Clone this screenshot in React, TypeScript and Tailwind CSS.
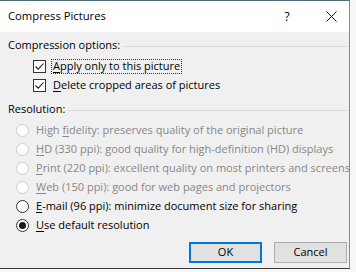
import React from "react";

function Check() {
  return (
    <span className="w-[13px] h-[13px] border border-[#333333] bg-white flex items-center justify-center shrink-0">
      <svg width="11" height="11" viewBox="0 0 11 11">
        <path d="M1.5 5.5 L4.2 8.2 L9.5 2.5" fill="none" stroke="#1a1a1a" strokeWidth="1.1" />
      </svg>
    </span>
  );
}

function Radio({ disabled, checked }: { disabled?: boolean; checked?: boolean }) {
  return (
    <span
      className={
        "w-[13px] h-[13px] rounded-full bg-white border flex items-center justify-center shrink-0 " +
        (disabled ? "border-[#cccccc]" : "border-[#333333]")
      }
    >
      {checked && <span className="w-[7px] h-[7px] rounded-full bg-[#1a1a1a]" />}
    </span>
  );
}

function Header({ text }: { text: string }) {
  return (
    <div className="h-[19px] flex items-center gap-[3px] pr-[2px]">
      <span className="whitespace-nowrap">{text}</span>
      <span className="flex-1 h-px bg-[#d9d9d9] mt-[1px]" />
    </div>
  );
}

function RadioRow({
  u,
  rest,
  pre,
  disabled,
  checked,
}: {
  u: string;
  rest: string;
  pre?: string;
  disabled?: boolean;
  checked?: boolean;
}) {
  return (
    <div className="h-[19px] flex items-center pl-[8px] gap-[7px]">
      <Radio disabled={disabled} checked={checked} />
      <span className={"whitespace-nowrap " + (disabled ? "text-[#878787]" : "text-black")}>
        {pre}
        <span className="underline underline-offset-[2px]">{u}</span>
        {rest}
      </span>
    </div>
  );
}

export default function App() {
  return (
    <div className="w-[356px] h-[272px] bg-[#f7f7f7] overflow-hidden text-[11px] text-black font-['Open_Sans',sans-serif]">
      <div className="w-[350px] h-[269px] flex flex-col border-t border-t-[#4d6d79] border-r border-r-[#8a8a8a] border-b border-b-[#3a3a3a]">
        <div className="h-[31px] bg-white flex items-center pl-[8px] shrink-0">
          <span className="flex-1 text-[11.25px]">Compress Pictures</span>
          <span className="w-[12px] text-center mr-[33px] text-[12px]">?</span>
          <svg width="11" height="11" viewBox="0 0 11 11" className="mr-[12px]">
            <path d="M0.5 0.5 L10.5 10.5 M10.5 0.5 L0.5 10.5" stroke="#111" strokeWidth="1" />
          </svg>
        </div>
        <div className="flex-1 bg-[#f0f0f0] pl-[8px] pt-[4px] flex flex-col">
          <Header text="Compression options:" />
          <div className="mt-[2px] h-[19px] flex items-center pl-[25px] gap-[5px]">
            <Check />
            <span className="border border-dotted border-[#333] px-[1px] h-[15px] flex items-center whitespace-nowrap">
              <span>
                <span className="underline underline-offset-[2px]">A</span>pply only to this picture
              </span>
            </span>
          </div>
          <div className="h-[19px] flex items-center pl-[25px] gap-[7px]">
            <Check />
            <span className="whitespace-nowrap">
              <span className="underline underline-offset-[2px]">D</span>elete cropped areas of pictures
            </span>
          </div>
          <div className="mt-[5px]">
            <Header text="Resolution:" />
          </div>
          <div className="mt-[2px] flex flex-col">
            <RadioRow disabled pre="High " u="f" rest="idelity: preserves quality of the original picture" />
            <RadioRow disabled u="H" rest="D (330 ppi): good quality for high-definition (HD) displays" />
            <RadioRow disabled u="P" rest="rint (220 ppi): excellent quality on most printers and screens" />
            <RadioRow disabled u="W" rest="eb (150 ppi): good for web pages and projectors" />
            <RadioRow u="E" rest="-mail (96 ppi): minimize document size for sharing" />
            <RadioRow checked u="U" rest="se default resolution" />
          </div>
          <div className="mt-[7px] flex justify-end gap-[12px] pr-[2px]">
            <button className="w-[73px] h-[21px] bg-[#e1e1e1] border-2 border-[#0078d7] flex items-center justify-center">
              OK
            </button>
            <button className="w-[73px] h-[21px] bg-[#e1e1e1] border border-[#adadad] flex items-center justify-center">
              Cancel
            </button>
          </div>
        </div>
      </div>
    </div>
  );
}
